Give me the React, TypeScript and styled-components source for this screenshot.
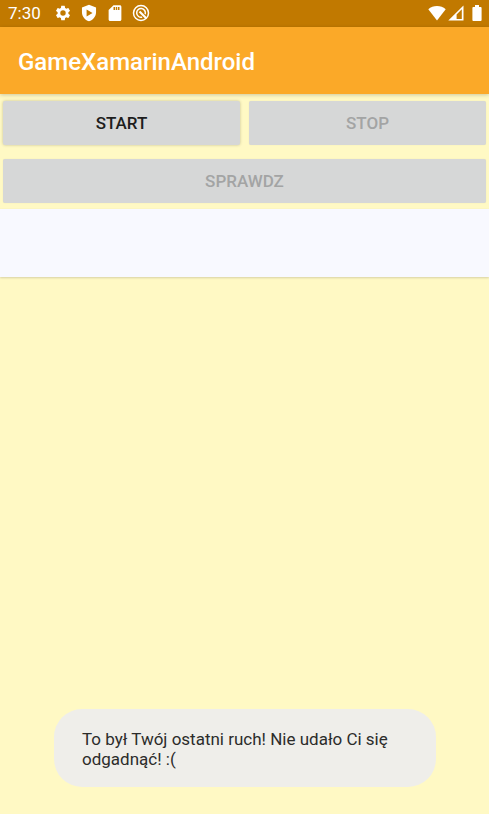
import React from "react";
import styled, { createGlobalStyle } from "styled-components";

const GlobalStyle = createGlobalStyle`
  *, *::before, *::after { box-sizing: border-box; }
  body {
    margin: 0;
    background: #fff9c4;
    font-family: Roboto, "Noto Sans", sans-serif;
  }
`;

const Screen = styled.div`
  display: flex;
  flex-direction: column;
  min-height: 100vh;
  background: #fff9c4;
`;

const StatusBar = styled.div`
  display: flex;
  align-items: center;
  justify-content: space-between;
  height: 27px;
  padding: 0 7px 1px 8px;
  background: #c17900;
  color: #fff;
`;

const StatusGroup = styled.div<{ $gap: number }>`
  display: flex;
  align-items: center;
  gap: ${(p) => p.$gap}px;
`;

const Clock = styled.time`
  width: 38px;
  font-size: 17px;
  line-height: 26px;
`;

const Icon = styled.svg`
  display: block;
  fill: currentColor;
`;

const BatterySlot = styled.span`
  padding-left: 6px;
`;

const AppBar = styled.header`
  display: flex;
  align-items: center;
  height: 67px;
  padding: 0 18px;
  background: #fba928;
  box-shadow: 0 1px 4px rgba(0, 0, 0, 0.2);
`;

const Title = styled.h1`
  margin: 0;
  padding-top: 2px;
  color: #fff;
  font-size: 24px;
  line-height: 32px;
  font-weight: 500;
`;

const Controls = styled.div`
  display: grid;
  grid-template-columns: 1fr 1fr;
  gap: 14px 9px;
  padding: 7px 3px 6px;
`;

const Button = styled.button<{ $wide?: boolean }>`
  grid-column: ${(p) => (p.$wide ? "1 / -1" : "auto")};
  height: 44px;
  padding: 0;
  border: 0;
  border-radius: 2px;
  background: #d6d7d7;
  color: #1d1d1d;
  font-family: inherit;
  font-size: 17px;
  line-height: 20px;
  font-weight: 500;
  text-transform: uppercase;
  box-shadow: 0 0 3px rgba(0, 0, 0, 0.24);

  &:disabled {
    color: #a3a4a4;
    box-shadow: 0 0 1px rgba(0, 0, 0, 0.12);
  }
`;

const Board = styled.div`
  display: grid;
  grid-template-columns: repeat(4, 1fr);
  box-shadow: 0 1px 2px rgba(0, 0, 0, 0.16);
`;

const Cell = styled.div`
  height: 68px;
  background: #f8f9ff;
`;

const Toast = styled.div`
  position: fixed;
  left: 54px;
  right: 53px;
  bottom: 27px;
  padding: 20px 28px 18px;
  border-radius: 28px;
  background: #efeeea;
  color: #2c2c2a;
  font-size: 17px;
  line-height: 20px;
`;

const GearIcon = () => (
  <Icon width="18" height="18" viewBox="0 0 24 24" aria-hidden="true">
    <path d="M19.14 12.94c.04-.3.06-.61.06-.94 0-.32-.02-.64-.07-.94l2.03-1.58a.49.49 0 0 0 .12-.61l-1.92-3.32a.49.49 0 0 0-.59-.22l-2.39.96c-.5-.38-1.03-.7-1.62-.94l-.36-2.54a.48.48 0 0 0-.48-.41h-3.84c-.24 0-.43.17-.47.41l-.36 2.54c-.59.24-1.13.57-1.62.94l-2.39-.96a.48.48 0 0 0-.59.22L2.74 8.87c-.12.21-.08.47.12.61l2.03 1.58c-.05.3-.09.63-.09.94s.02.64.07.94l-2.03 1.58a.49.49 0 0 0-.12.61l1.92 3.32c.12.22.37.29.59.22l2.39-.96c.5.38 1.03.7 1.62.94l.36 2.54c.05.24.24.41.48.41h3.84c.24 0 .44-.17.47-.41l.36-2.54c.59-.24 1.13-.56 1.62-.94l2.39.96c.22.08.47 0 .59-.22l1.92-3.32a.49.49 0 0 0-.12-.61l-2.01-1.58zM12 15.6A3.6 3.6 0 1 1 12 8.4a3.6 3.6 0 0 1 0 7.2z" />
  </Icon>
);

const ShieldPlayIcon = () => (
  <Icon width="18" height="18" viewBox="0 0 24 24" aria-hidden="true">
    <path
      fillRule="evenodd"
      d="M12 1 2.6 4.6V11c0 5.6 3.9 10.3 9.4 12 5.5-1.7 9.4-6.4 9.4-12V4.6zM8.8 7.3v9.4L16.7 12z"
    />
  </Icon>
);

const SdCardIcon = () => (
  <Icon width="18" height="18" viewBox="0 0 24 24" aria-hidden="true">
    <path d="M18.5 1.5H10L3.5 8v12.5c0 1.1.9 2 2 2h13c1.1 0 2-.9 2-2v-17c0-1.1-.9-2-2-2zM12 8h-2V4h2v4zm3 0h-2V4h2v4zm3 0h-2V4h2v4z" />
  </Icon>
);

const SwirlIcon = () => (
  <Icon width="18" height="18" viewBox="0 0 24 24" aria-hidden="true">
    <g fill="none" stroke="currentColor" strokeWidth="2">
      <circle cx="12" cy="12" r="10" />
      <path d="M13.6 17.5A5.8 5.8 0 1 1 17.6 13.6" />
      <path d="m10 10 9 9" strokeWidth="2.8" />
    </g>
  </Icon>
);

const WifiIcon = () => (
  <Icon width="18" height="16" viewBox="0 0 18 16" aria-hidden="true">
    <path d="M9 15.5.3 4.3C2.7 2 5.7 1 9 1s6.3 1 8.7 3.3z" />
  </Icon>
);

const SignalIcon = () => (
  <Icon width="16" height="16" viewBox="0 0 16 16" aria-hidden="true">
    <path fillRule="evenodd" d="M15.5.4v15.1H.3zM13.8 4.3 8.6 9.5V14h5.2z" />
  </Icon>
);

const BatteryIcon = () => (
  <Icon width="10" height="16" viewBox="0 0 10 16" aria-hidden="true">
    <path d="M3 0h4v2h1.7q.9 0 .9.9v12.2q0 .9-.9.9H1.3q-.9 0-.9-.9V2.9Q.4 2 1.3 2H3z" />
  </Icon>
);

export default function App() {
  return (
    <>
      <GlobalStyle />
      <Screen>
        <StatusBar>
          <StatusGroup $gap={8}>
            <Clock>7:30</Clock>
            <GearIcon />
            <ShieldPlayIcon />
            <SdCardIcon />
            <SwirlIcon />
          </StatusGroup>
          <StatusGroup $gap={2}>
            <WifiIcon />
            <SignalIcon />
            <BatterySlot>
              <BatteryIcon />
            </BatterySlot>
          </StatusGroup>
        </StatusBar>
        <AppBar>
          <Title>GameXamarinAndroid</Title>
        </AppBar>
        <main>
          <Controls>
            <Button type="button">Start</Button>
            <Button type="button" disabled>Stop</Button>
            <Button type="button" disabled $wide>Sprawdz</Button>
          </Controls>
          <Board>
            {[0, 1, 2, 3].map((cell) => (
              <Cell key={cell} />
            ))}
          </Board>
        </main>
        <Toast role="status">
          To był Twój ostatni ruch! Nie udało Ci się odgadnąć! :(
        </Toast>
      </Screen>
    </>
  );
}
